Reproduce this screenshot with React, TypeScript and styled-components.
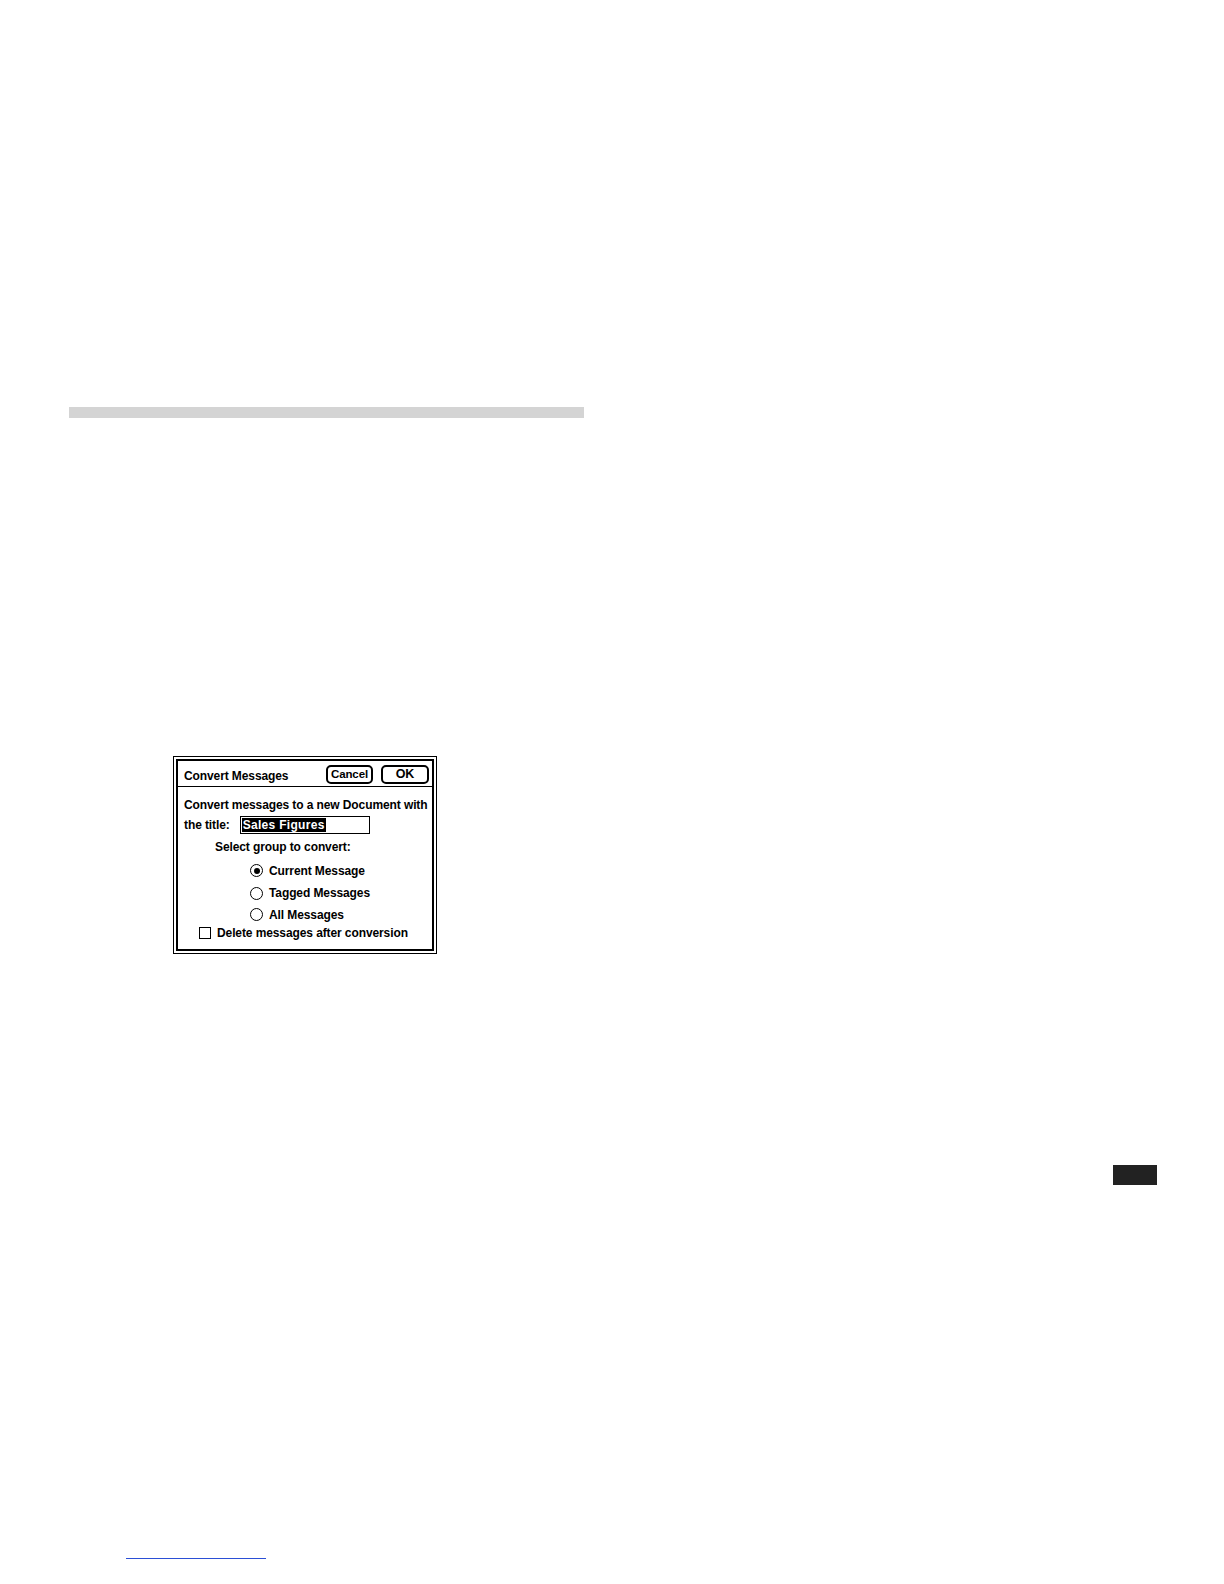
import styled, { createGlobalStyle } from 'styled-components';

const GlobalStyle = createGlobalStyle`
  html, body { margin: 0; padding: 0; background: #fff; }
  body { font-family: "Liberation Sans", Arial, sans-serif; }
`;

const Page = styled.div`
  width: 1224px;
  display: flex;
  flex-direction: column;
  align-items: flex-start;
`;

const RuleBar = styled.div`
  margin: 407px 0 0 69px;
  width: 515px;
  height: 11px;
  background: #d4d4d4;
`;

const Dialog = styled.div`
  margin: 338px 0 0 173px;
  width: 264px;
  height: 198px;
  box-sizing: border-box;
  border: 1px solid #000;
  padding: 2px;
`;

const DialogInner = styled.div`
  height: 100%;
  box-sizing: border-box;
  border: 2px solid #000;
  display: flex;
  flex-direction: column;
  font-weight: bold;
  font-size: 12px;
  letter-spacing: -0.1px;
  color: #000;
`;

const TitleRow = styled.div`
  height: 26px;
  display: flex;
  align-items: center;
  padding: 0 3px 0 6px;
  border-bottom: 1px solid #000;
  box-sizing: border-box;
`;

const Title = styled.span`
  flex: 1;
  font-weight: bold;
  padding-top: 4px;
`;

const Button = styled.div<{ $default?: boolean; $w: number }>`
  width: ${(p) => p.$w}px;
  height: 19px;
  box-sizing: border-box;
  border: ${(p) => (p.$default ? 2.5 : 2)}px solid #000;
  border-radius: 5px;
  display: flex;
  align-items: center;
  justify-content: center;
  margin-left: 8px;
  margin-top: 1px;
  font-size: ${(p) => (p.$default ? 12.5 : 11.5)}px;
`;

const Body = styled.div`
  padding: 8px 0 0 6px;
  display: flex;
  flex-direction: column;
`;

const Line = styled.div<{ $indent?: number; $h?: number }>`
  height: ${(p) => p.$h ?? 20}px;
  display: flex;
  align-items: center;
  padding-left: ${(p) => p.$indent ?? 0}px;
  white-space: nowrap;
`;

const TitleField = styled.div`
  margin-left: 10px;
  width: 130px;
  height: 18px;
  box-sizing: border-box;
  border: 1px solid #000;
  display: flex;
  align-items: center;
  padding-left: 1px;
`;

const Selected = styled.span`
  background: #000;
  color: #fff;
  padding: 0 1px;
  line-height: 14px;
  font-size: 12px;
  letter-spacing: 0.3px;
`;

const Radio = styled.span<{ $on?: boolean }>`
  width: 13px;
  height: 13px;
  box-sizing: border-box;
  border: 1.3px solid #000;
  border-radius: 50%;
  margin-right: 6px;
  display: inline-flex;
  align-items: center;
  justify-content: center;
  &::after {
    content: '';
    display: ${(p) => (p.$on ? 'block' : 'none')};
    width: 6px;
    height: 6px;
    border-radius: 50%;
    background: #000;
  }
`;

const Check = styled.span`
  width: 12px;
  height: 12px;
  box-sizing: border-box;
  border: 1px solid #000;
  margin-right: 6px;
`;

const BlackTab = styled.div`
  margin: 211px 0 0 1113px;
  width: 44px;
  height: 20px;
  background: #222;
`;

const Underline = styled.div`
  margin: 373px 0 0 126px;
  width: 140px;
  height: 1px;
  background: #2b4fd6;
`;

export default function App() {
  return (
    <>
      <GlobalStyle />
      <Page>
        <RuleBar />
        <Dialog>
          <DialogInner>
            <TitleRow>
              <Title>Convert Messages</Title>
              <Button $w={47}>Cancel</Button>
              <Button $w={48} $default>
                OK
              </Button>
            </TitleRow>
            <Body>
              <Line>Convert messages to a new Document with</Line>
              <Line>
                the title:
                <TitleField>
                  <Selected>Sales Figures</Selected>
                </TitleField>
              </Line>
              <Line $indent={31} $h={24}>
                Select group to convert:
              </Line>
              <Line $indent={66} $h={23}>
                <Radio $on />
                Current Message
              </Line>
              <Line $indent={66} $h={22}>
                <Radio />
                Tagged Messages
              </Line>
              <Line $indent={66} $h={21}>
                <Radio />
                All Messages
              </Line>
              <Line $indent={15} $h={16}>
                <Check />
                Delete messages after conversion
              </Line>
            </Body>
          </DialogInner>
        </Dialog>
        <BlackTab />
        <Underline />
      </Page>
    </>
  );
}
